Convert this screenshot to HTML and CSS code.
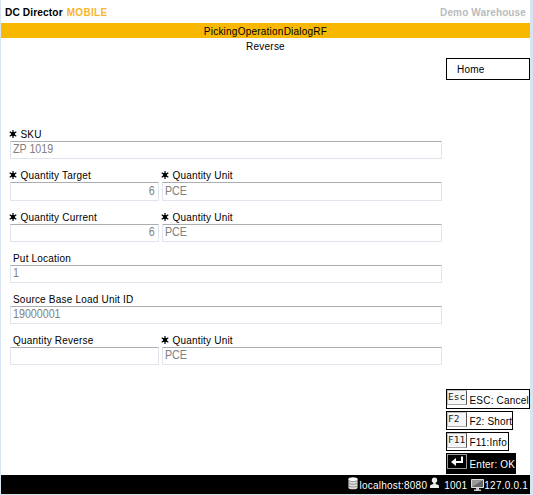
FILE: index.html
```
<!DOCTYPE html>
<html lang="en">
<head>
<meta charset="utf-8">
<title>DC Director MOBILE</title>
<link rel="stylesheet" href="styles.css">
</head>
<body>
<svg class="defs" aria-hidden="true">
  <symbol id="star" viewBox="0 0 8 8"><path d="M4 0v8M.7 1.8 7.3 6.2M.7 6.2 7.3 1.8" stroke="#000" stroke-width="1.2"/><circle cx="4" cy="4" r="2.2" fill="#000"/></symbol>
</svg>
<div class="app">
  <header class="brand">
    <div class="product"><span class="name">DC Director</span><span class="edition">MOBILE</span></div>
    <div class="site">Demo Warehouse</div>
  </header>
  <div class="title"><span>PickingOperationDialogRF</span></div>
  <div class="subtitle"><span>Reverse</span></div>
  <main class="content">
    <form class="form">
      <div class="row"><div class="field wide"><label><svg class="star"><use href="#star"/></svg><span>SKU</span></label><div class="input"><span>ZP 1019</span></div></div></div>
      <div class="row tall">
        <div class="field qty"><label><svg class="star"><use href="#star"/></svg><span>Quantity Target</span></label><div class="input num"><span>6</span></div></div>
        <div class="field unit"><label><svg class="star"><use href="#star"/></svg><span>Quantity Unit</span></label><div class="input"><span>PCE</span></div></div>
      </div>
      <div class="row">
        <div class="field qty"><label><svg class="star"><use href="#star"/></svg><span>Quantity Current</span></label><div class="input num"><span>6</span></div></div>
        <div class="field unit"><label><svg class="star"><use href="#star"/></svg><span>Quantity Unit</span></label><div class="input"><span>PCE</span></div></div>
      </div>
      <div class="row"><div class="field wide"><label class="plain"><span>Put Location</span></label><div class="input"><span>1</span></div></div></div>
      <div class="row"><div class="field wide"><label class="plain"><span>Source Base Load Unit ID</span></label><div class="input"><span>19000001</span></div></div></div>
      <div class="row">
        <div class="field qty"><label class="plain"><span>Quantity Reverse</span></label><div class="input"></div></div>
        <div class="field unit"><label><svg class="star"><use href="#star"/></svg><span>Quantity Unit</span></label><div class="input"><span>PCE</span></div></div>
      </div>
    </form>
    <aside class="side">
      <div class="home">Home</div>
      <div class="actions">
        <div class="action esc"><span class="key">Esc</span><span class="text">ESC: Cancel</span></div>
        <div class="action f2"><span class="key">F2</span><span class="text">F2: Short</span></div>
        <div class="action f11"><span class="key">F11</span><span class="text">F11:Info</span></div>
        <div class="action enter"><span class="key"><svg width="18" height="13" viewBox="0 0 18 13"><path d="M14 1.500v5.5H6" fill="none" stroke="#fff" stroke-width="2"/><path d="M3 7 8 3v8z" fill="#fff"/></svg></span><span class="text">Enter: OK</span></div>
      </div>
    </aside>
  </main>
  <footer class="status">
    <svg class="db" width="10" height="13" viewBox="0 0 11 14"><path d="M.5 2v9.7c0 2.3 10 2.3 10 0V2z" fill="#ddd"/><ellipse cx="5.500" cy="2.2" rx="5" ry="2" fill="#fff"/><path d="M.5 3.2c0 2.2 10 2.2 10 0M.5 6.2c0 2.2 10 2.2 10 0M.5 9.2c0 2.2 10 2.2 10 0" fill="none" stroke="#777" stroke-width=".8"/></svg>
    <span class="host">localhost:8080</span>
    <svg class="user" width="9" height="12" viewBox="0 0 10 13"><circle cx="5" cy="3.4" r="3" fill="#eee"/><path d="M3.700 5h2.6v2.500l3.2 1.2c.5.5.5 2.8.5 3.3H0c0-.5 0-2.8.5-3.3l3.2-1.2z" fill="#eee"/></svg>
    <span class="uid">1001</span>
    <svg class="pc" width="13" height="12" viewBox="0 0 13 12"><path d="M.5.5h12v8H.5z" fill="#666" stroke="#ddd"/><path d="M1 1h11L1 8z" fill="#999"/><path d="M5 9h3v1.500h2V12H3v-1.500h2z" fill="#ccc"/></svg>
    <span class="ip">127.0.0.1</span>
  </footer>
</div>
</body>
</html>
```
FILE: styles.css
```
* { box-sizing: border-box; }
body { margin: 0; background: #d7e4f2; font-family: "Liberation Sans", Arial, sans-serif; font-size: 10px; letter-spacing: .2px; color: #000; }
span, .site, .home, .input { white-space: nowrap; }
.defs { position: absolute; width: 0; height: 0; }
.app { width: 529px; height: 494px; margin-left: 1px; background: #fff; display: flex; flex-direction: column; }
.brand { height: 23px; display: flex; justify-content: space-between; padding: 7px 4px 0; line-height: 12px; font-weight: bold; }
.product { display: flex; gap: 4px; }
.name { letter-spacing: .1px; font-size: 10.2px; }
.edition { color: #f7b52c; letter-spacing: .3px; font-size: 10px; }
.site { color: #b9bcc0; letter-spacing: .13px; }
.title { height: 15px; background: #f8b800; text-align: center; line-height: 17px; letter-spacing: .23px; }
.subtitle { height: 20px; text-align: center; line-height: 17px; letter-spacing: .23px; }
.content { flex: 1; display: flex; }
.form { margin: 70px 0 0 9px; width: 432px; }
.row { display: flex; gap: 3px; height: 41px; }
.row.tall { height: 42px; }
.field { display: flex; flex-direction: column; }
.wide { width: 432px; }
.qty { width: 149px; }
.unit { width: 280px; }
label { height: 13px; display: flex; align-items: center; line-height: 12px; }
label.plain { padding-left: 3px; }
.star { width: 8px; height: 8px; margin: 0 3px 2px -.6px; }
.input { height: 18px; border: 1px solid #e0e4ed; border-top-color: #abadb3; border-radius: 1px; padding: 0 3px 0 2px; font-size: 12px; line-height: 15px; letter-spacing: 0; color: #808080; }
.input span { display: inline-block; transform: scaleX(.89); transform-origin: left; }
.input.num span { transform-origin: right; }
.tall .input { height: 19px; line-height: 16px; }
.num { text-align: right; }
.side { margin-left: 4px; width: 84px; display: flex; flex-direction: column; justify-content: space-between; }
.home { height: 22px; border: 1px solid #000; padding-left: 10px; line-height: 22px; }
.actions { display: flex; flex-direction: column; align-items: flex-start; gap: 2px; padding-bottom: 1px; }
.action { height: 19px; border: 1px solid #000; display: flex; }
.action .text { line-height: 20px; margin-left: 2.500px; overflow: hidden; }
.action.esc .text, .action.enter .text { line-height: 22px; }
.key { width: 20px; height: 15px; border: 1px solid #c0c0c0; border-right-color: #555; border-bottom-color: #aaa; background: #f6f6f6; color: #222; letter-spacing: 0; font: 9.500px/12px "DejaVu Sans Mono", monospace; }
.action.esc { height: 20px; }
.esc { width: 84px; }
.f2 { width: 67px; }
.f11 { width: 63px; }
.enter { width: 70px; height: 21px; background: #000; color: #fff; }
.enter .key { background: #000; border-color: #999; }
.key svg { display: block; }
.status { height: 19px; background: #000; color: #fff; display: flex; justify-content: flex-end; padding: 2px 2px 0 0; line-height: 17px; letter-spacing: .22px; }
.host { margin: 0 3px 0 2px; }
.uid { margin: 0 4px 0 5px; }
.pc { margin-top: 2px; }
```
